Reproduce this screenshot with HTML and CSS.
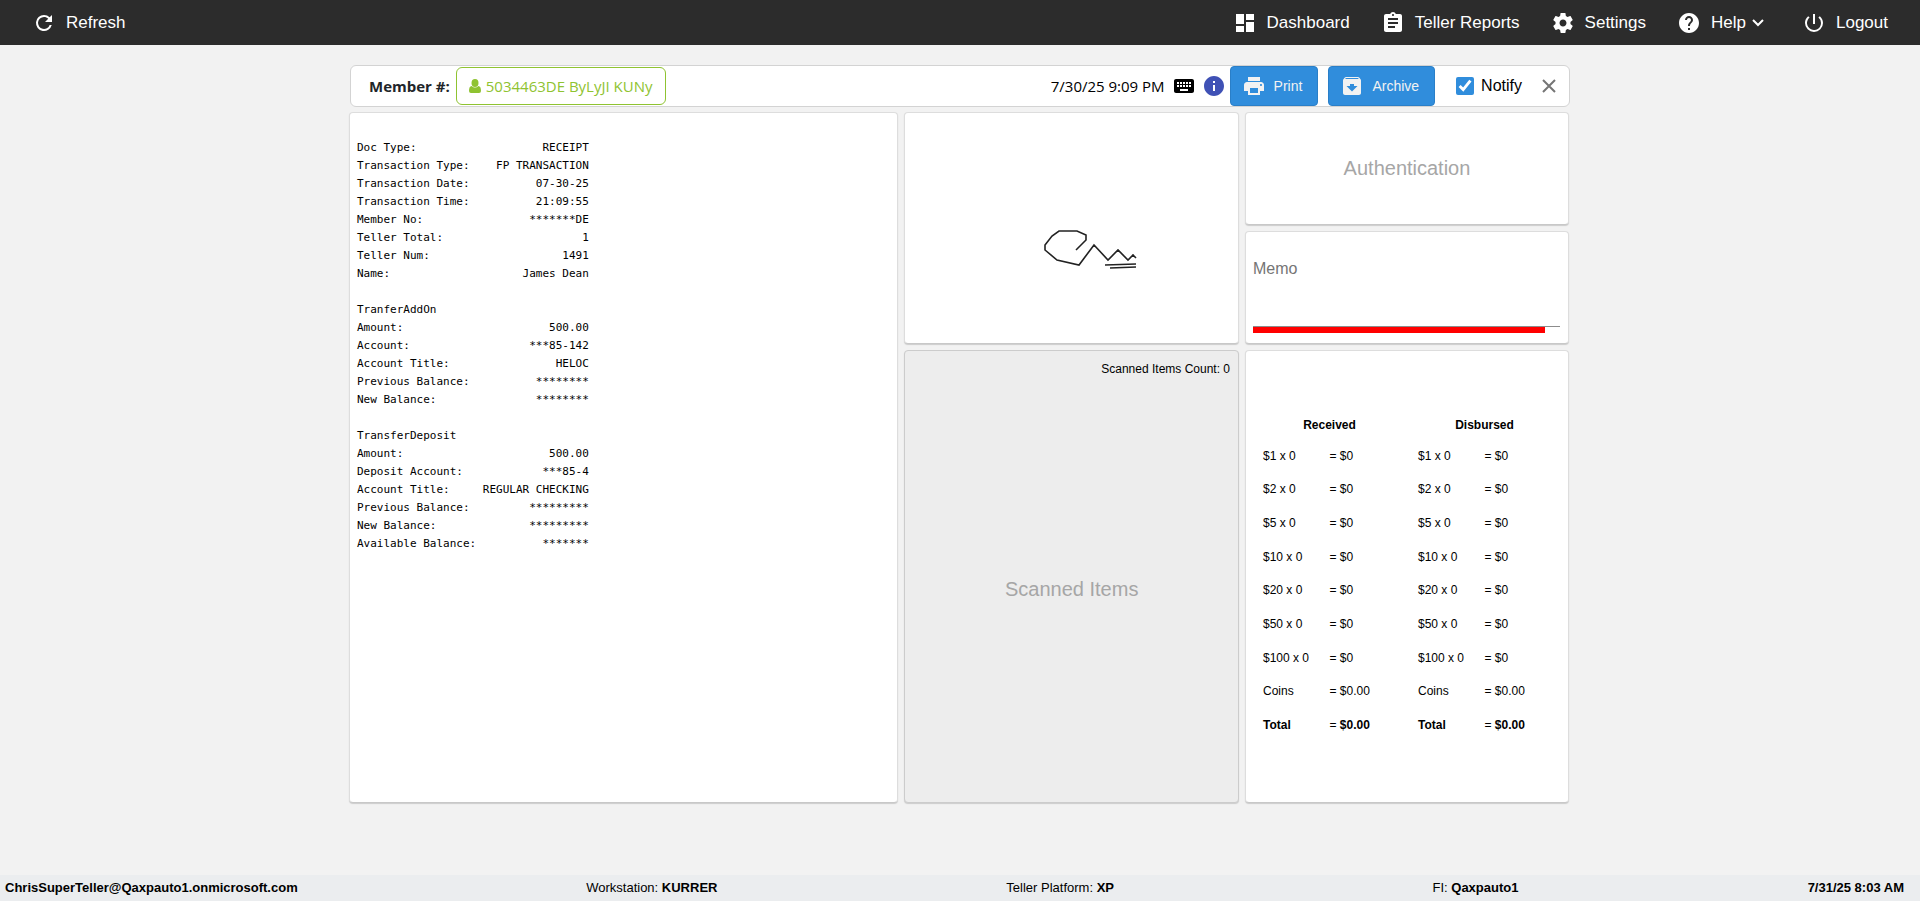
FILE: index.html
```
<!DOCTYPE html>
<html lang="en">
<head>
    <meta charset="UTF-8">
    <meta name="viewport" content="width=device-width, initial-scale=1.0">
    <title>Receipt</title>
    <link rel="stylesheet" href="styles.css">
</head>
<body>
    <header class="topbar">
        <a class="nav-link" href="#">
            <svg class="icon" viewBox="0 0 24 24"><path d="M17.65 6.35A7.96 7.96 0 0 0 12 4a8 8 0 1 0 7.73 10h-2.08A6 6 0 1 1 12 6c1.66 0 3.14.69 4.22 1.78L13 11h7V4z"/></svg>
            Refresh
        </a>
        <nav class="nav">
            <a class="nav-link" href="#">
                <svg class="icon" viewBox="0 0 24 24"><path d="M3 13h8V3H3zm0 8h8v-6H3zm10 0h8V11h-8zm0-18v6h8V3z"/></svg>
                Dashboard
            </a>
            <a class="nav-link" href="#">
                <svg class="icon" viewBox="0 0 24 24"><path d="M19 3h-4.180C14.400 1.840 13.300 1 12 1s-2.400.840-2.820 2H5c-1.100 0-2 .900-2 2v14c0 1.100.900 2 2 2h14c1.100 0 2-.900 2-2V5c0-1.100-.900-2-2-2zm-7 0c.550 0 1 .450 1 1s-.450 1-1 1-1-.450-1-1 .450-1 1-1zm2 14H7v-2h7zm3-4H7v-2h10zm0-4H7V7h10z"/></svg>
                Teller Reports
            </a>
            <a class="nav-link" href="#">
                <svg class="icon" viewBox="0 0 24 24"><path d="M19.430 12.980c.040-.320.070-.640.070-.980s-.030-.660-.070-.980l2.110-1.650c.190-.150.240-.420.120-.640l-2-3.460c-.120-.220-.390-.300-.610-.220l-2.490 1c-.520-.400-1.080-.730-1.690-.980l-.380-2.650C14.460 2.180 14.250 2 14 2h-4c-.250 0-.460.180-.490.420l-.380 2.650c-.610.250-1.170.590-1.690.980l-2.490-1c-.230-.090-.490 0-.610.220l-2 3.460c-.130.220-.070.490.120.640l2.110 1.650c-.040.320-.070.650-.070.980s.030.660.070.980l-2.110 1.650c-.190.150-.240.420-.120.640l2 3.460c.120.220.390.300.610.220l2.490-1c.520.400 1.080.730 1.690.980l.380 2.650c.030.240.240.420.490.420h4c.250 0 .460-.180.490-.420l.380-2.650c.610-.250 1.170-.590 1.690-.980l2.490 1c.230.090.490 0 .610-.220l2-3.460c.120-.220.070-.490-.120-.640zM12 15.500c-1.930 0-3.500-1.570-3.500-3.500s1.570-3.500 3.500-3.500 3.500 1.570 3.500 3.500-1.570 3.500-3.500 3.500z"/></svg>
                Settings
            </a>
            <a class="nav-link" href="#">
                <svg class="icon" viewBox="0 0 24 24"><path d="M12 2C6.480 2 2 6.480 2 12s4.480 10 10 10 10-4.480 10-10S17.520 2 12 2zm1 17h-2v-2h2zm2.070-7.750-.900.920C13.450 12.900 13 13.500 13 15h-2v-.500c0-1.100.450-2.100 1.170-2.830l1.240-1.260c.370-.360.590-.860.590-1.410 0-1.100-.900-2-2-2s-2 .900-2 2H8c0-2.210 1.790-4 4-4s4 1.790 4 4c0 .880-.360 1.680-.930 2.250z"/></svg>
                <span class="nav-menu">Help <svg class="chevron" viewBox="0 0 12 8"><path d="M1 1l5 5 5-5"/></svg></span>
            </a>
            <a class="nav-link" href="#">
                <svg class="icon" viewBox="0 0 24 24"><path d="M13 3h-2v10h2zm4.830 2.170-1.420 1.420A6.920 6.920 0 0 1 19 12a7 7 0 1 1-11.420-5.420L6.170 5.170A8.930 8.930 0 0 0 3 12a9 9 0 0 0 18 0c0-2.740-1.230-5.180-3.170-6.830z"/></svg>
                Logout
            </a>
        </nav>
    </header>

    <main class="content">
        <section class="member-bar">
            <span class="member-label">Member #:</span>
            <button class="member-button" type="button">
                <svg class="user-icon" viewBox="0 0 12 14"><ellipse cx="6" cy="4" rx="3.5" ry="4"/><path d="M2.600 7Q0 7.200 0 12q0 2 2 2h8q2 0 2-2 0-4.800-2.600-5Q6 10 2.600 7z"/></svg>
                5034463DE ByLyJI KUNy
            </button>
            <div class="member-actions">
                <span class="timestamp">7/30/25 9:09 PM</span>
                <svg class="icon keyboard-icon" viewBox="0 0 24 24"><path d="M20 5H4c-1.100 0-2 .900-2 2v10c0 1.100.900 2 2 2h16c1.100 0 2-.900 2-2V7c0-1.100-.900-2-2-2zm-9 3h2v2h-2zm0 3h2v2h-2zM8 8h2v2H8zm0 3h2v2H8zm-1 2H5v-2h2zm0-3H5V8h2zm9 7H8v-2h8zm0-4h-2v-2h2zm0-3h-2V8h2zm3 3h-2v-2h2zm0-3h-2V8h2z"/></svg>
                <svg class="icon info-icon" viewBox="0 0 24 24"><path d="M12 2C6.480 2 2 6.480 2 12s4.480 10 10 10 10-4.480 10-10S17.520 2 12 2zm1 15h-2v-6h2zm0-8h-2V7h2z"/></svg>
                <button class="action-button" type="button">
                    <svg class="icon" viewBox="0 0 24 24"><path d="M19 8H5c-1.660 0-3 1.340-3 3v6h4v4h12v-4h4v-6c0-1.660-1.340-3-3-3zm-3 11H8v-5h8zm3-7c-.550 0-1-.450-1-1s.450-1 1-1 1 .450 1 1-.450 1-1 1zm-1-9H6v4h12z"/></svg>
                    Print
                </button>
                <button class="action-button archive-button" type="button">
                    <svg class="icon" viewBox="0 0 24 24"><path d="M20.540 5.230l-1.390-1.680C18.880 3.210 18.470 3 18 3H6c-.470 0-.880.210-1.160.550L3.460 5.230C3.170 5.570 3 6.020 3 6.500V19c0 1.100.900 2 2 2h14c1.100 0 2-.900 2-2V6.500c0-.480-.170-.930-.460-1.270zM12 17.500L6.500 12H10v-2h4v2h3.500zM5.120 5l.810-1h12l.940 1z"/></svg>
                    Archive
                </button>
                <label class="notify" for="notify">
                    <input type="checkbox" id="notify" checked>
                    Notify
                </label>
                <button class="close-button" type="button" aria-label="Close">
                    <svg viewBox="0 0 14 14"><path d="M1 1l12 12M13 1L1 13"/></svg>
                </button>
            </div>
        </section>

        <div class="panels">
            <section class="card receipt-card">
<pre class="receipt">

Doc Type:                   RECEIPT
Transaction Type:    FP TRANSACTION
Transaction Date:          07-30-25
Transaction Time:          21:09:55
Member No:                *******DE
Teller Total:                     1
Teller Num:                    1491
Name:                    James Dean

TranferAddOn
Amount:                      500.00
Account:                  ***85-142
Account Title:                HELOC
Previous Balance:          ********
New Balance:               ********

TransferDeposit
Amount:                      500.00
Deposit Account:            ***85-4
Account Title:     REGULAR CHECKING
Previous Balance:         *********
New Balance:              *********
Available Balance:          *******
</pre>
            </section>

            <section class="card signature-card">
                <svg class="signature" viewBox="0 0 130 90">
                    <path d="M69 67L79 57V52L70 48H52L45 53L38 62V67L50 77L72 82L87 62L101 77L111 67L121 77L126 72L129 75M98 82L129 81M103 85L129 84"/>
                </svg>
            </section>

            <section class="card auth-card">
                <span class="placeholder-text">Authentication</span>
            </section>

            <section class="card memo-card">
                <textarea class="memo" placeholder="Memo" aria-label="Memo"></textarea>
                <div class="memo-bar"></div>
            </section>

            <section class="card scanned-card">
                <div class="scanned-count">Scanned Items Count: 0</div>
                <span class="placeholder-text">Scanned Items</span>
            </section>

            <section class="card cash-card">
                <table class="cash-table">
                    <thead><tr><th colspan="2">Received</th></tr></thead>
                    <tbody>
                        <tr><td>$1 x 0</td><td>= $0</td></tr>
                        <tr><td>$2 x 0</td><td>= $0</td></tr>
                        <tr><td>$5 x 0</td><td>= $0</td></tr>
                        <tr><td>$10 x 0</td><td>= $0</td></tr>
                        <tr><td>$20 x 0</td><td>= $0</td></tr>
                        <tr><td>$50 x 0</td><td>= $0</td></tr>
                        <tr><td>$100 x 0</td><td>= $0</td></tr>
                        <tr><td>Coins</td><td>= $0.00</td></tr>
                        <tr><td><b>Total</b></td><td>= <b>$0.00</b></td></tr>
                    </tbody>
                </table>
                <table class="cash-table">
                    <thead><tr><th colspan="2">Disbursed</th></tr></thead>
                    <tbody>
                        <tr><td>$1 x 0</td><td>= $0</td></tr>
                        <tr><td>$2 x 0</td><td>= $0</td></tr>
                        <tr><td>$5 x 0</td><td>= $0</td></tr>
                        <tr><td>$10 x 0</td><td>= $0</td></tr>
                        <tr><td>$20 x 0</td><td>= $0</td></tr>
                        <tr><td>$50 x 0</td><td>= $0</td></tr>
                        <tr><td>$100 x 0</td><td>= $0</td></tr>
                        <tr><td>Coins</td><td>= $0.00</td></tr>
                        <tr><td><b>Total</b></td><td>= <b>$0.00</b></td></tr>
                    </tbody>
                </table>
            </section>
        </div>
    </main>

    <footer class="statusbar">
        <b>ChrisSuperTeller@Qaxpauto1.onmicrosoft.com</b>
        <span>Workstation: <b>KURRER</b></span>
        <span>Teller Platform: <b>XP</b></span>
        <span>FI: <b>Qaxpauto1</b></span>
        <b>7/31/25 8:03 AM</b>
    </footer>
</body>
</html>
```
FILE: styles.css
```
* {
    box-sizing: border-box;
}
body {
    margin: 0;
    min-height: 100vh;
    display: flex;
    flex-direction: column;
    background: #f2f2f2;
    color: #000;
    font-family: "Liberation Sans", Arial, sans-serif;
    font-size: 16px;
}
button {
    font-family: inherit;
    cursor: pointer;
}
.icon {
    width: 24px;
    height: 24px;
    flex: none;
    fill: currentColor;
}

/* Top bar */
.topbar {
    height: 45px;
    padding: 0 32px;
    display: flex;
    justify-content: space-between;
    align-items: center;
    background: #2c2c2c;
}
.nav {
    display: flex;
    gap: 31px;
}
.nav-link {
    display: flex;
    align-items: center;
    gap: 10px;
    color: #fff;
    font-size: 17px;
    text-decoration: none;
}
.nav-menu {
    margin-right: 7px;
    display: flex;
    align-items: center;
    gap: 6px;
}
.chevron {
    width: 12px;
    height: 8px;
    fill: none;
    stroke: currentColor;
    stroke-width: 2;
}

/* Content */
.content {
    flex: 1;
    width: 100%;
    max-width: 1222px;
    margin: 0 auto;
    padding: 20px 1px 0 0;
}
.member-bar {
    min-height: 42px;
    margin-left: 1px;
    padding: 0 13px 0 18px;
    display: flex;
    align-items: center;
    background: #fff;
    border: 1px solid #d3d3d3;
    border-radius: 6px;
}
.member-label {
    color: #212529;
    font: bold 15px "Open Sans", "Noto Sans", sans-serif;
}
.member-button {
    height: 38px;
    margin-left: 6px;
    padding: 0 12px;
    display: flex;
    align-items: center;
    gap: 5px;
    background: #fff;
    border: 1px solid #8fc331;
    border-radius: 6px;
    color: #8fc331;
    font: 15px "Open Sans", "Noto Sans", sans-serif;
}
.user-icon {
    width: 12px;
    height: 14px;
    flex: none;
    fill: currentColor;
}
.member-actions {
    margin-left: auto;
    display: flex;
    align-items: center;
}
.timestamp {
    margin-right: 7px;
    font: 15px "Open Sans", "Noto Sans", sans-serif;
}
.info-icon {
    margin: 0 4px 0 6px;
    color: #3f51b5;
}
.action-button {
    height: 40px;
    padding: 0 15px 0 11px;
    display: flex;
    align-items: center;
    gap: 8px;
    background: #308ddc;
    border: 1px solid #2a7fc8;
    border-radius: 4px;
    color: #f2f2f2;
    font-size: 14px;
}
.archive-button {
    margin-left: 10px;
}
.notify {
    margin-left: 21px;
    display: flex;
    align-items: center;
    gap: 7px;
}
.notify input {
    width: 18px;
    height: 18px;
    margin: 0;
    accent-color: #308ddc;
}
.close-button {
    margin-left: 20px;
    padding: 0;
    display: flex;
    background: none;
    border: none;
}
.close-button svg {
    width: 14px;
    height: 14px;
    fill: none;
    stroke: #757575;
    stroke-width: 2;
}

.panels {
    margin: 5px 1px 0 0;
    display: grid;
    grid-template-columns: 550fr 335fr 322fr;
    grid-template-rows: 113px 113px minmax(453px, auto);
    gap: 6px;
}
.card {
    background: #fff;
    border: 1px solid #ddd;
    border-bottom-color: #c8c8c8;
    border-radius: 4px;
    box-shadow: 0 1px 1px #ccc;
}
.receipt-card {
    grid-row: 1 / 4;
    padding: 8px 7px;
}
.receipt {
    margin: 0;
    font: 11px/18px "DejaVu Sans Mono", monospace;
}
.signature-card {
    grid-area: 1 / 2 / 3 / 3;
    display: flex;
    justify-content: center;
    align-items: center;
}
.signature {
    width: 130px;
    height: 90px;
    fill: none;
    stroke: #222;
    stroke-width: 1.6;
}
.placeholder-text {
    color: #a6a6a6;
    font-size: 20px;
}
.auth-card {
    grid-area: 1 / 3;
    display: flex;
    justify-content: center;
    align-items: center;
}
.memo-card {
    grid-area: 2 / 3;
    padding: 27px 8px 0 7px;
}
.memo {
    display: block;
    width: 100%;
    height: 68px;
    padding: 0;
    background: none;
    border: none;
    border-bottom: 1px solid #8c8c8c;
    outline: none;
    resize: none;
    font: 16px/20px "Liberation Sans", Arial, sans-serif;
}
.memo::placeholder {
    color: #757575;
}
.memo-bar {
    width: 95%;
    height: 6px;
    background: #f00;
}
.scanned-card {
    grid-area: 3 / 2;
    padding: 11px 8px 0;
    display: grid;
    grid-template-rows: auto 1fr;
    justify-items: center;
    align-items: center;
    background: #ededed;
    border-color: #ccc;
}
.scanned-count {
    justify-self: end;
    font-size: 12px;
}
.cash-card {
    grid-area: 3 / 3;
    padding: 60px 17px;
    display: flex;
    align-items: flex-start;
    gap: 22px;
}
.cash-table {
    width: 133px;
    height: 331px;
    table-layout: fixed;
    border-collapse: collapse;
    font-size: 12px;
}
.cash-table th {
    height: 28px;
    padding: 0;
}
.cash-table td {
    padding: 0;
}

/* Status bar */
.statusbar {
    height: 26px;
    padding: 0 16px 2px 5px;
    display: grid;
    grid-template-columns: 581fr 420fr 426fr 375fr auto;
    align-items: center;
    background: #ebedef;
    font-size: 13px;
}
```
